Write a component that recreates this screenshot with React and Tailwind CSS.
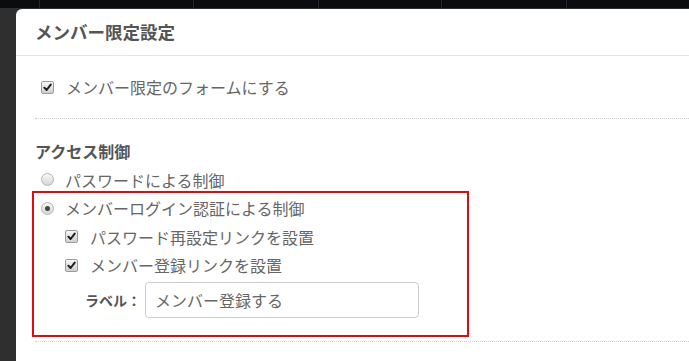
import React from "react";

// old-style gray checkbox
const Check = () => (
  <span className="w-[13px] h-[13px] shrink-0 rounded-[2px] border border-[#9c9c9c] bg-gradient-to-b from-[#f6f6f6] to-[#cfcfcf] flex items-center justify-center">
    <svg viewBox="0 0 10 10" className="w-[9px] h-[9px]">
      <path d="M1.5 5.2 L4 7.8 L8.6 1.8" fill="none" stroke="#1e1e1e" strokeWidth="2.2" strokeLinecap="round" strokeLinejoin="round" />
    </svg>
  </span>
);

const Radio = ({ checked }) => (
  <span className="w-[13px] h-[13px] shrink-0 rounded-full border border-[#b4b4b4] bg-gradient-to-b from-[#f7f7f7] to-[#d6d6d6] flex items-center justify-center">
    {checked && <span className="w-[5px] h-[5px] rounded-full bg-[#444]" />}
  </span>
);

const App = () => {
  const font = { fontFamily: '"Noto Sans CJK JP", "Noto Sans", sans-serif' };

  return (
    <div className="w-[689px] h-[361px] overflow-hidden bg-[#2f2f2f] flex flex-col" style={font}>
      {/* dark top strip */}
      <div className="h-[8px] shrink-0 bg-[#0b0c0e] flex">
        <div className="w-[40px] border-r border-[#25272a]" />
        <div className="w-[154px] border-r border-[#25272a]" />
        <div className="w-[125px] border-r border-[#25272a]" />
        <div className="w-[123px] border-r border-[#25272a]" />
        <div className="w-[125px] border-r border-[#25272a]" />
        <div className="flex-1" />
      </div>

      <div className="flex flex-1 pt-[1px]">
        <div className="w-[16px] shrink-0" />

        {/* modal */}
        <div className="flex-1 bg-white rounded-tl-[6px]">
          <div className="h-[47px] border-b border-[#e5e5e5] pl-[19px] flex items-center">
            <h2 className="text-[17.5px] font-bold text-[#555]">メンバー限定設定</h2>
          </div>

          <div className="pl-[19px]">
            <div className="h-[62px] pl-[6px] flex items-center gap-[12px] text-[16px] text-[#666]">
              <Check />
              <span>メンバー限定のフォームにする</span>
            </div>

            <div className="border-t border-dotted border-[#cfcfcf]" />

            <div className="pt-[19px]">
              <div className="h-[26px] flex items-center text-[16px] font-bold text-[#555]">アクセス制御</div>
              <div className="h-[27px] pt-[4px] pl-[6px] flex items-center gap-[11px] text-[16px] text-[#666]">
                <Radio />
                <span>パスワードによる制御</span>
              </div>

              {/* highlighted block */}
              <div className="-ml-[3px] w-[437px] h-[146px] border-2 border-[#e8080c] pl-[7px] text-[16px] text-[#666]">
                <div className="h-[30px] flex items-center gap-[11px]">
                  <Radio checked />
                  <span>メンバーログイン認証による制御</span>
                </div>
                <div className="h-[27px] pl-[24px] flex items-center gap-[12px]">
                  <Check />
                  <span>パスワード再設定リンクを設置</span>
                </div>
                <div className="h-[30px] pl-[24px] flex items-center gap-[12px]">
                  <Check />
                  <span>メンバー登録リンクを設置</span>
                </div>
                <div className="mt-[2px] pl-[44px] flex items-center">
                  <span className="w-[60px] text-[14px] font-bold text-[#555]">ラベル：</span>
                  <div className="w-[274px] h-[36px] border border-[#cccccc] rounded-[4px] pl-[9px] flex items-center text-[16px] text-[#666]">
                    メンバー登録する
                  </div>
                </div>
              </div>

              <div className="mt-[4px] border-t border-dotted border-[#cfcfcf]" />
            </div>
          </div>
        </div>
      </div>
    </div>
  );
};

export default App;
